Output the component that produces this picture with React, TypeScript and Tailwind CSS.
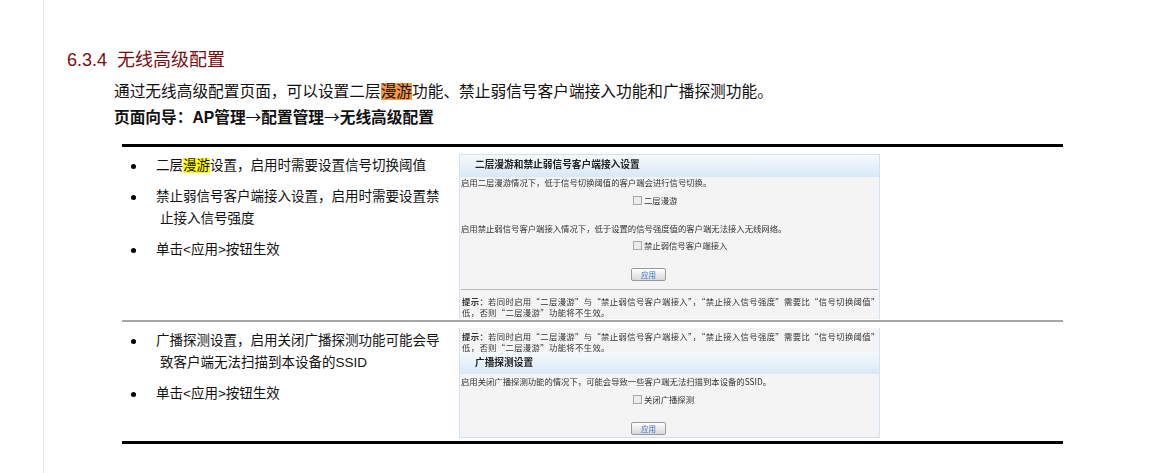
const font = "font-['Liberation_Sans','Noto_Sans_CJK_SC',sans-serif]";

function Arrow() {
  return <span className="font-['Noto_Sans_CJK_SC',sans-serif] font-normal leading-none">→</span>;
}

function Check({ label }: { label: string }) {
  return (
    <div className="flex items-center gap-[2px] pl-[173px]">
      <span className="w-[9px] h-[9px] border border-[#a8a8a8] bg-[#ececec]" />
      <span>{label}</span>
    </div>
  );
}

function ApplyButton() {
  return (
    <div className="pl-[171px]">
      <span className="w-[35px] h-[13px] flex items-center justify-center rounded-[2px] border border-[#9a9a9a] bg-gradient-to-b from-white to-[#d8d8d8] text-[7.5px] leading-none text-[#3b6fc4]">
        应用
      </span>
    </div>
  );
}

function PanelHeader({ title, className }: { title: string; className: string }) {
  return (
    <div className={`pl-[15px] flex items-center bg-gradient-to-b from-[#f6fafd] to-[#d9e8f6] font-bold text-[9.7px] text-[#222] ${className}`}>
      {title}
    </div>
  );
}

function Hint() {
  return (
    <p className="text-[8.35px] leading-[10.5px] tracking-[0.35px] text-[#333] pl-[2px] whitespace-nowrap">
      <b>提示：</b>若同时启用“二层漫游”与“禁止弱信号客户端接入”，“禁止接入信号强度”需要比“信号切换阈值”
      <br />
      低，否则“二层漫游”功能将不生效。
    </p>
  );
}

function RoamingPanel() {
  return (
    <div className="w-[421px] h-[165px] mt-[7px] overflow-hidden bg-[#f4f4f4] border-x border-t border-[#cfe3f4] font-['Noto_Sans_CJK_SC',sans-serif] text-[8.35px] leading-[11px] text-[#333] blur-[0.25px]">
      <PanelHeader title="二层漫游和禁止弱信号客户端接入设置" className="h-[22px] pb-[3px]" />
      <p className="pl-[1px]">启用二层漫游情况下，低于信号切换阈值的客户端会进行信号切换。</p>
      <div className="mt-[7px]"><Check label="二层漫游" /></div>
      <p className="pl-[1px] mt-[17px]">启用禁止弱信号客户端接入情况下，低于设置的信号强度值的客户端无法接入无线网络。</p>
      <div className="mt-[6px]"><Check label="禁止弱信号客户端接入" /></div>
      <div className="mt-[17px]"><ApplyButton /></div>
      <div className="mt-[8px] mb-[6px] mx-[1px] h-px bg-[#b5b5b5]" />
      <Hint />
    </div>
  );
}

function ProbePanel() {
  return (
    <div className="w-[421px] h-[110px] mt-[6px] overflow-hidden bg-[#f4f4f4] border-x border-b border-[#cfe3f4] font-['Noto_Sans_CJK_SC',sans-serif] text-[8.35px] leading-[11px] text-[#333] blur-[0.25px]">
      <div className="pt-[3px]"><Hint /></div>
      <PanelHeader title="广播探测设置" className="h-[22px] pb-[2px]" />
      <p className="pl-[1px] mt-[2px]">启用关闭广播探测功能的情况下，可能会导致一些客户端无法扫描到本设备的SSID。</p>
      <div className="mt-[7px]"><Check label="关闭广播探测" /></div>
      <div className="mt-[17px]"><ApplyButton /></div>
    </div>
  );
}

function Bullet({ children }: { children: React.ReactNode }) {
  return (
    <li className="flex">
      <span className="w-[5px] h-[5px] mt-[9px] ml-[9px] mr-[20px] rounded-full bg-black shrink-0" />
      <div>{children}</div>
    </li>
  );
}

export default function App() {
  return (
    <div className={`${font} w-[1155px] h-[473px] overflow-hidden bg-white`}>
      <div className="ml-[43px] h-full border-l border-[#e6e6e6] pl-[23px] pt-[48px]">
        <h3 className="text-[18px] leading-[24px] text-[#7b0d0d] flex">
          <span className="w-[50px]">6.3.4</span>
          <span>无线高级配置</span>
        </h3>
        <div className="ml-[47px] mt-[7px] text-[15.7px] leading-[26px] text-[#111]">
          <p>
            通过无线高级配置页面，可以设置二层<span className="bg-[#f79646]">漫游</span>功能、禁止弱信号客户端接入功能和广播探测功能。
          </p>
          <p className="font-bold">
            页面向导：AP管理<Arrow />配置管理<Arrow />无线高级配置
          </p>
        </div>
        <div className="ml-[55px] mt-[13px] w-[941px] border-t-[3px] border-b-[3px] border-black text-[13.5px] leading-[22px] text-[#111]">
          <div className="flex h-[175px] border-b-[2px] border-[#a6a6a6]">
            <ul className="w-[337px] pt-[8px] flex flex-col gap-[9px]">
              <Bullet>
                二层<span className="bg-[#ffff00]">漫游</span>设置，启用时需要设置信号切换阈值
              </Bullet>
              <Bullet>
                禁止弱信号客户端接入设置，启用时需要设置禁
                <div className="pl-[4px]">止接入信号强度</div>
              </Bullet>
              <Bullet>单击&lt;应用&gt;按钮生效</Bullet>
            </ul>
            <RoamingPanel />
          </div>
          <div className="flex h-[119px]">
            <ul className="w-[337px] pt-[8px] flex flex-col gap-[9px]">
              <Bullet>
                广播探测设置，启用关闭广播探测功能可能会导
                <div className="pl-[4px]">致客户端无法扫描到本设备的SSID</div>
              </Bullet>
              <Bullet>单击&lt;应用&gt;按钮生效</Bullet>
            </ul>
            <ProbePanel />
          </div>
        </div>
      </div>
    </div>
  );
}
